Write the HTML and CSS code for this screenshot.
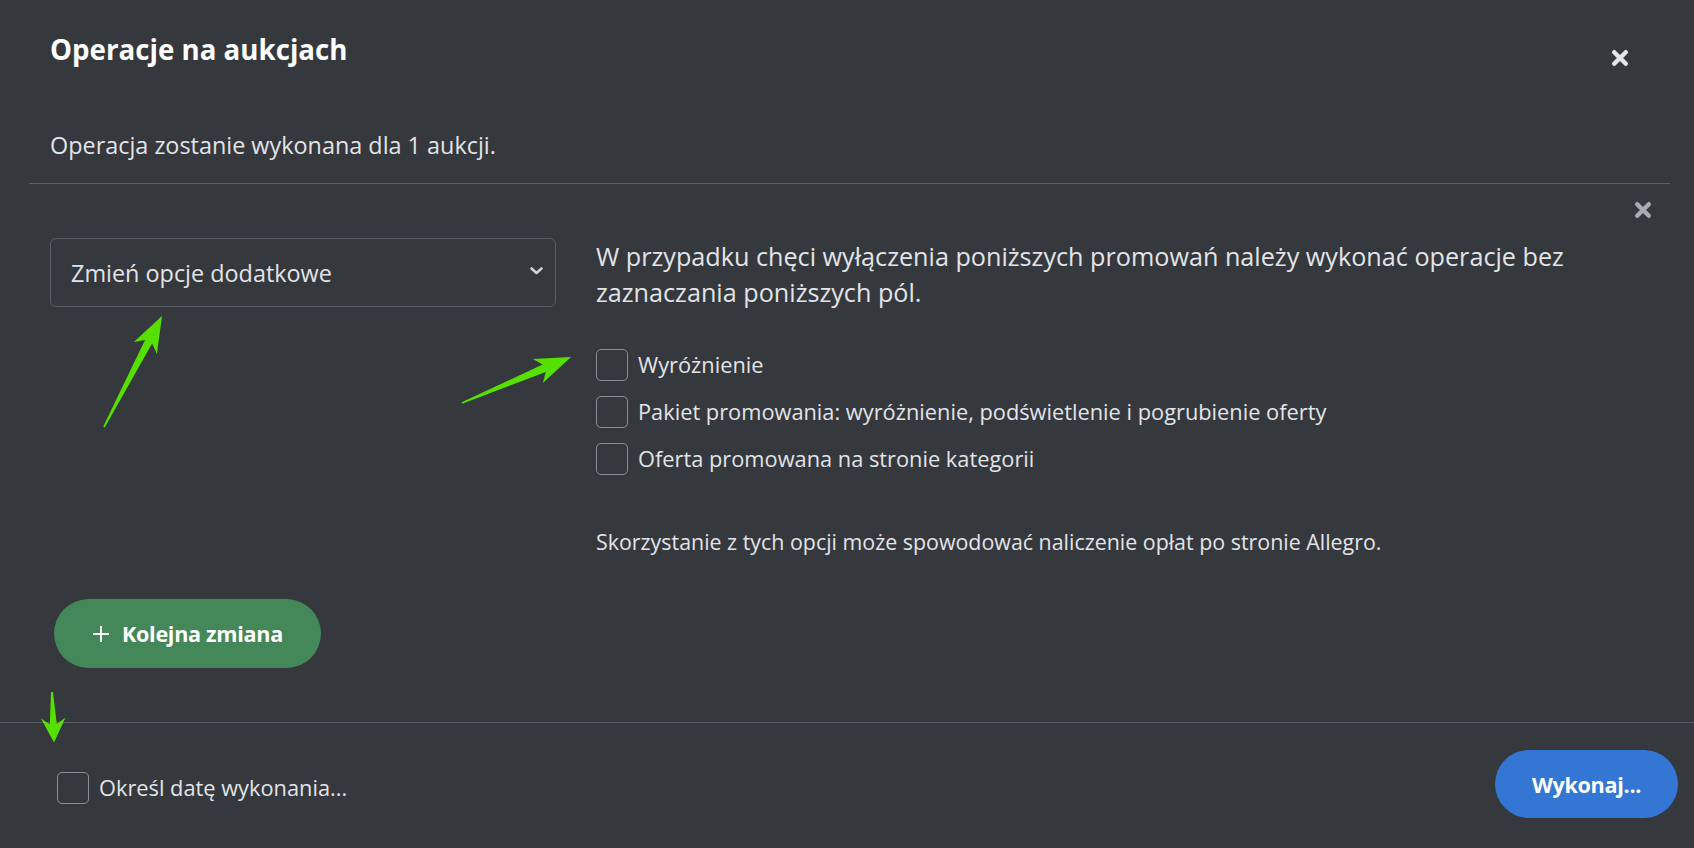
FILE: index.html
```html
<!DOCTYPE html>
<html lang="pl">
<head>
<meta charset="utf-8">
<title>Operacje na aukcjach</title>
<link rel="stylesheet" href="styles.css">
</head>
<body>
<div class="modal">
  <header class="header">
    <h1 class="title">Operacje na aukcjach</h1>
    <button class="close close-main" aria-label="Zamknij">
      <svg width="18" height="18" viewBox="0 0 18 18"><path d="M3.2 3.2 L14.8 14.8 M14.8 3.2 L3.2 14.8" stroke="currentColor" stroke-width="4.4" stroke-linecap="round"/></svg>
    </button>
  </header>
  <p class="subtitle">Operacja zostanie wykonana dla 1 aukcji.</p>

  <section class="change">
    <div class="change-top">
      <button class="close close-row" aria-label="Usuń">
        <svg width="18" height="18" viewBox="0 0 18 18"><path d="M3.2 3.2 L14.8 14.8 M14.8 3.2 L3.2 14.8" stroke="currentColor" stroke-width="4.4" stroke-linecap="round"/></svg>
      </button>
    </div>
    <div class="change-body">
      <div class="select">
        <span class="select-text">Zmień opcje dodatkowe</span>
        <svg class="chevron" width="13" height="8" viewBox="0 0 13 8"><polyline points="1.5,1.5 6.5,6 11.5,1.5" fill="none" stroke="currentColor" stroke-width="2.6" stroke-linecap="round" stroke-linejoin="round"/></svg>
      </div>
      <div class="options">
        <p class="info">W przypadku chęci wyłączenia poniższych promowań należy wykonać operacje bez zaznaczania poniższych pól.</p>
        <ul class="checks">
          <li class="check"><input type="checkbox" class="cb"><span class="check-label">Wyróżnienie</span></li>
          <li class="check"><input type="checkbox" class="cb"><span class="check-label">Pakiet promowania: wyróżnienie, podświetlenie i pogrubienie oferty</span></li>
          <li class="check"><input type="checkbox" class="cb"><span class="check-label">Oferta promowana na stronie kategorii</span></li>
        </ul>
        <p class="note">Skorzystanie z tych opcji może spowodować naliczenie opłat po stronie Allegro.</p>
      </div>
    </div>
  </section>

  <div class="add-row">
    <button class="btn btn-green">
      <svg class="plus" width="18" height="18" viewBox="0 0 18 18"><path d="M9 1 V17 M1 9 H17" stroke="currentColor" stroke-width="2"/></svg>
      <span>Kolejna zmiana</span>
    </button>
  </div>

  <footer class="footer">
    <label class="check date-check"><input type="checkbox" class="cb"><span class="check-label">Określ datę wykonania...</span></label>
    <button class="btn btn-blue">Wykonaj...</button>
  </footer>
</div>

<svg class="annotations" width="1694" height="848" viewBox="0 0 1694 848">
  <polygon fill="#56e000" points="103.3,426.6 145,339.9 133.8,341.9 162,316 156.9,353.9 152.1,343.6 104.7,427.4"/>
  <polygon fill="#56e000" points="461.7,402.3 542.7,364.6 532.8,359 571,357 542.9,383 545.8,372 462.3,403.7"/>
  <polygon fill="#56e000" points="51,692 49.8,724.2 41,718.5 54,742.5 65.5,717.5 56.8,723.9 53,692"/>
</svg>
</body>
</html>
```

FILE: styles.css
```css
* {
  box-sizing: border-box;
}

html, body {
  margin: 0;
  padding: 0;
}

body {
  position: relative;
  width: 1694px;
  height: 848px;
  overflow: hidden;
  background: #35383d;
  font-family: "Open Sans", "Noto Sans", sans-serif;
  color: #e2e4e8;
}

.modal {
  display: flex;
  flex-direction: column;
  height: 848px;
}

.header {
  display: flex;
  justify-content: space-between;
  align-items: flex-start;
  padding: 29px 65px 0 50px;
}

.title {
  margin: 0;
  font-size: 27.7px;
  line-height: 40px;
  font-weight: 700;
  color: #ffffff;
}

.close {
  display: flex;
  padding: 0;
  margin: 0;
  border: 0;
  background: transparent;
  cursor: pointer;
}

.close-main {
  margin-top: 20px;
  color: #e3e5e9;
}

.close-row {
  color: #a9acb2;
}

.subtitle {
  margin: 58px 0 0 50px;
  font-size: 23.4px;
  line-height: 36px;
  color: #e2e4e8;
}

.change {
  margin: 20px 24px 0 29px;
  border-top: 1px solid #5c5f65;
  padding: 17px 18px 0 21px;
}

.change-top {
  display: flex;
  justify-content: flex-end;
}

.change-body {
  display: grid;
  grid-template-columns: 506px 1fr;
  column-gap: 40px;
  margin-top: 19px;
}

.select {
  display: flex;
  align-items: center;
  justify-content: space-between;
  height: 69px;
  padding: 0 12px 0 20px;
  border: 1px solid #5a5d63;
  border-radius: 6px;
}

.select-text {
  font-size: 23.4px;
  color: #e2e4e8;
}

.chevron {
  color: #cfd1d5;
  margin-bottom: 3px;
}

.options {
  min-width: 0;
}

.info {
  margin: 0;
  font-size: 25.2px;
  line-height: 36px;
  color: #e2e4e8;
}

.checks {
  list-style: none;
  margin: 39px 0 0 0;
  padding: 0;
  display: flex;
  flex-direction: column;
  gap: 15px;
}

.check {
  display: flex;
  align-items: center;
  gap: 10px;
}

.cb {
  appearance: none;
  -webkit-appearance: none;
  margin: 0;
  width: 32px;
  height: 32px;
  flex: none;
  border: 1px solid #8d9096;
  border-radius: 5px;
  background: transparent;
}

.check-label {
  font-size: 21.8px;
  line-height: 32px;
  color: #e2e4e8;
}

.note {
  margin: 51px 0 0 0;
  font-size: 21.4px;
  line-height: 32px;
  color: #e2e4e8;
}

.add-row {
  display: flex;
  padding: 41px 0 0 54px;
}

.btn {
  display: inline-flex;
  align-items: center;
  height: 69px;
  border: 0;
  border-radius: 35px;
  font-family: "Open Sans", "Noto Sans", sans-serif;
  font-size: 21.6px;
  font-weight: 700;
  letter-spacing: -0.3px;
  color: #ffffff;
  cursor: pointer;
}

.btn-green {
  gap: 12px;
  width: 267px;
  padding: 0 0 0 38px;
  background: #448759;
}

.plus {
  color: #ffffff;
}

.btn-blue {
  justify-content: center;
  width: 183px;
  height: 68px;
  padding: 0;
  background: #3476d3;
}

.footer {
  margin-top: auto;
  display: flex;
  justify-content: space-between;
  align-items: center;
  border-top: 1px solid #5c5f65;
  padding: 27px 16px 30px 57px;
}

.date-check {
  margin-top: 7px;
}

.annotations {
  position: absolute;
  left: 0;
  top: 0;
  pointer-events: none;
}
```
